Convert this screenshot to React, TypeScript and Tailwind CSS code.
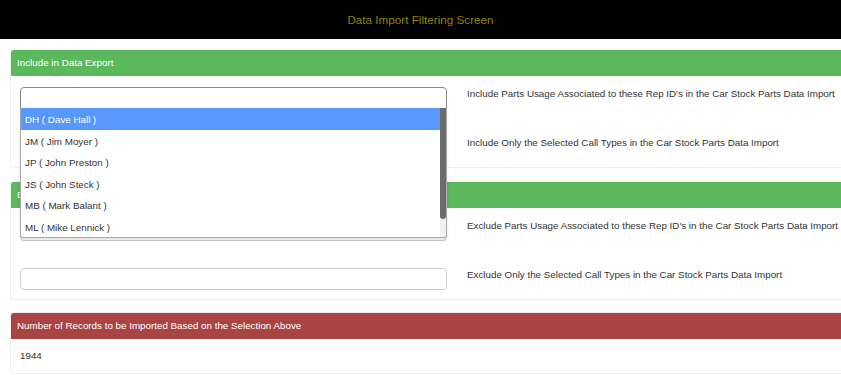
import React from "react";

const items = [
  "DH ( Dave Hall )",
  "JM ( Jim Moyer )",
  "JP ( John Preston )",
  "JS ( John Steck )",
  "MB ( Mark Balant )",
  "ML ( Mike Lennick )",
];

function Row({ label, children }: { label: string; children?: React.ReactNode }) {
  return (
    <div className="flex h-[22px] items-start">
      <div className="relative ml-[9px] h-[22px] w-[427px] shrink-0">{children}</div>
      <div className="ml-[20px] whitespace-nowrap text-[9.8px] leading-[14px] text-[#333]">{label}</div>
    </div>
  );
}

function Input({ dark }: { dark?: boolean }) {
  return (
    <div
      className={
        "h-[22px] w-full rounded-[4px] bg-white border " +
        (dark ? "border-[#8a8a8a] rounded-b-none" : "border-[#cfcfcf]")
      }
    />
  );
}

export default function App() {
  return (
    <div className="w-[841px] h-[375px] overflow-hidden bg-white" style={{ fontFamily: '"Liberation Sans", Arial, sans-serif' }}>
      <div className="flex h-[39px] items-center justify-center bg-black text-[11.7px] text-[#8f8400]">
        Data Import Filtering Screen
      </div>

      <div className="mt-[10px] ml-[10px]">
        {/* Panel 1 */}
        <div className="rounded-l-[3px] border border-r-0 border-[#f0f0f0]">
          <div className="flex h-[26px] items-center rounded-tl-[3px] bg-[#5cb85c] pl-[6px] text-[9.8px] text-white">
            Include in Data Export
          </div>
          <div className="flex flex-col gap-[27px] pt-[11px] pb-[9px]">
            <Row label="Include Parts Usage Associated to these Rep ID's in the Car Stock Parts Data Import">
              <Input dark />
              <div className="absolute left-0 top-[21px] z-10 h-[130px] w-[427px] overflow-hidden rounded-b-[3px] border border-t-0 border-[#aaa] bg-white shadow-[0_2px_3px_rgba(0,0,0,0.12)]">
                <div className="flex h-full">
                  <div className="flex-1">
                    {items.map((it, i) => (
                      <div
                        key={it}
                        className={
                          "flex h-[21.6px] items-center pl-[4px] pt-[3px] text-[9.8px] " +
                          (i === 0 ? "bg-[#5897fb] text-white" : "text-[#333]")
                        }
                      >
                        {it}
                      </div>
                    ))}
                  </div>
                  <div className="flex w-[6px] flex-col bg-[#f1f1f1]">
                    <div className="h-[111px] rounded-b-[3px] bg-[#6b6b6b]" />
                  </div>
                </div>
              </div>
            </Row>
            <Row label="Include Only the Selected Call Types in the Car Stock Parts Data Import">
              <Input />
            </Row>
          </div>
        </div>

        {/* Panel 2 */}
        <div className="mt-[13px] rounded-l-[3px] border border-r-0 border-[#f0f0f0]">
          <div className="flex h-[26px] items-center rounded-tl-[3px] bg-[#5cb85c] pl-[6px] text-[9.8px] text-white">
            Exclude from Data Export
          </div>
          <div className="flex flex-col gap-[27px] pt-[11px] pb-[9px]">
            <Row label="Exclude Parts Usage Associated to these Rep ID's in the Car Stock Parts Data Import">
              <Input />
            </Row>
            <Row label="Exclude Only the Selected Call Types in the Car Stock Parts Data Import">
              <Input />
            </Row>
          </div>
        </div>

        {/* Panel 3 */}
        <div className="mt-[12px] rounded-l-[3px] border border-r-0 border-[#f0f0f0]">
          <div className="flex h-[26px] items-center rounded-tl-[3px] bg-[#a94442] pl-[6px] text-[9.8px] text-white">
            Number of Records to be Imported Based on the Selection Above
          </div>
          <div className="py-[10px] pl-[9px] text-[9.8px] leading-[14px] text-[#333]">1944</div>
        </div>
      </div>
    </div>
  );
}
